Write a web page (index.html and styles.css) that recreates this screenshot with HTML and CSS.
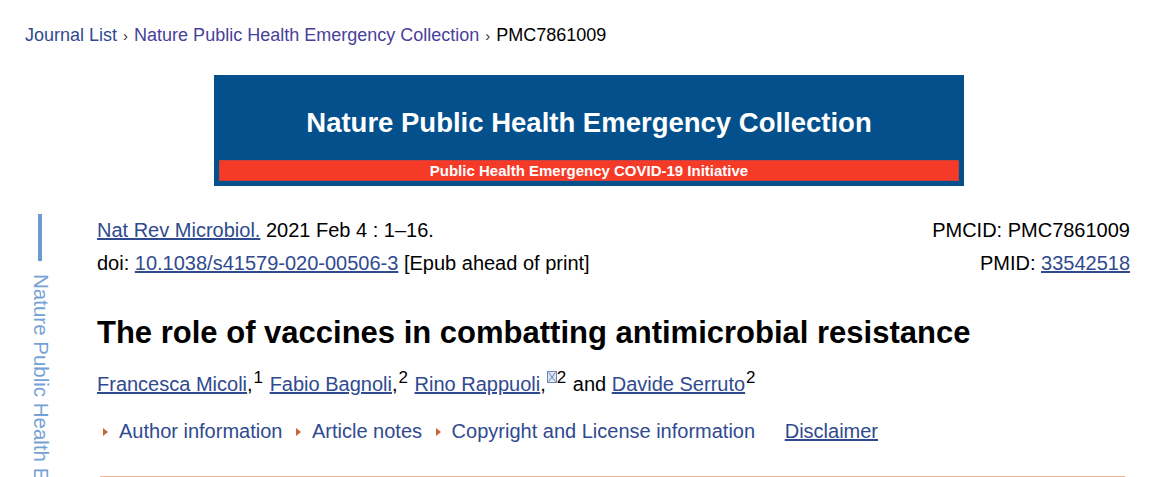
FILE: index.html
```html
<!DOCTYPE html>
<html lang="en">

<head>
  <meta charset="UTF-8">
  <meta name="viewport" content="width=device-width, initial-scale=1.0">
  <title>The role of vaccines in combatting antimicrobial resistance - PMC</title>
  <link rel="stylesheet" href="styles.css">
</head>

<body>
  <div id="page">
    <div class="crumbs">
      <a class="crumb" href="#">Journal List</a>
      <span class="sep">›</span>
      <a class="crumb visited" href="#">Nature Public Health Emergency Collection</a>
      <span class="sep">›</span>
      <span class="here">PMC7861009</span>
    </div>

    <div class="banner">
      <div class="banner-title">Nature Public Health Emergency Collection</div>
      <div class="banner-strip">Public Health Emergency COVID-19 Initiative</div>
    </div>

    <div class="main">
      <div class="side">
        <div class="side-bar"></div>
        <div class="side-text">Nature Public Health Emergency Collection</div>
      </div>

      <div class="article">
        <div class="cite">
          <div>
            <div class="line"><a href="#">Nat Rev Microbiol.</a> 2021 Feb 4 : 1–16.</div>
            <div class="line">doi: <a href="#">10.1038/s41579-020-00506-3</a> [Epub ahead of print]</div>
          </div>
          <div class="ids">
            <div class="line">PMCID: PMC7861009</div>
            <div class="line">PMID: <a href="#">33542518</a></div>
          </div>
        </div>

        <h1 class="title">The role of vaccines in combatting antimicrobial resistance</h1>

        <div class="authors">
          <a href="#">Francesca Micoli</a>,<sup>1</sup>
          <a href="#">Fabio Bagnoli</a>,<sup>2</sup>
          <a href="#">Rino Rappuoli</a>,<sup><svg class="mail" width="10" height="12" viewBox="0 0 10 12"><rect x="0.5" y="0.5" width="9" height="11" fill="#dce6f3" stroke="#6f87b3"/><path d="M1.5 1.5 L8.5 10.5 M8.5 1.5 L1.5 10.5" stroke="#6f87b3" stroke-width="1"/></svg>2</sup>
          and <a href="#">Davide Serruto</a><sup>2</sup>
        </div>

        <div class="toggles">
          <span class="tog">Author information</span>
          <span class="tog">Article notes</span>
          <span class="tog">Copyright and License information</span>
          <a class="disc" href="#">Disclaimer</a>
        </div>

        <div class="rule"></div>
      </div>
    </div>
  </div>
</body>

</html>
```

FILE: styles.css
```css
html,
body {
  margin: 0;
  padding: 0;
  background: #fff;
  overflow: hidden;
}

body {
  font-family: "Liberation Sans", Arial, sans-serif;
  color: #000;
}

a {
  color: #2f4a8f;
}

#page {
  padding: 23px 0 0 25px;
}

/* breadcrumb */
.crumbs {
  font-size: 18px;
  line-height: 24px;
}

.crumb {
  color: #2f4a8f;
  text-decoration: none;
}

.crumb.visited {
  color: #46429a;
}

.sep {
  color: #333;
  font-size: 15px;
  margin: 0 1px;
}

/* banner */
.banner {
  width: 750px;
  height: 111px;
  margin: 27px auto 0;
  background-color: #03508c;
  box-sizing: border-box;
  padding: 0 5px 5px;
  display: flex;
  flex-direction: column;
  justify-content: flex-end;
}

.banner-title {
  color: #fff;
  font-weight: bold;
  font-size: 27.5px;
  text-align: center;
  line-height: 30px;
  margin-bottom: 22px;
}

.banner-strip {
  height: 21px;
  line-height: 20px;
  background-color: #f63a28;
  border: 1px solid #c9413c;
  box-sizing: border-box;
  color: #fff;
  font-weight: bold;
  font-size: 15px;
  text-align: center;
}

/* content row */
.main {
  display: flex;
  margin-top: 28px;
}

.side {
  width: 72px;
  flex-shrink: 0;
  display: flex;
  flex-direction: column;
  align-items: flex-start;
  padding-left: 6px;
  box-sizing: border-box;
}

.side-bar {
  width: 4px;
  height: 47px;
  margin: 0 0 0 7px;
  background-color: #6a9bd1;
}

.side-text {
  writing-mode: vertical-rl;
  font-size: 20.5px;
  line-height: 20px;
  color: #74a2d6;
  margin: 13px 0 0 0;
  white-space: nowrap;
}

.article {
  flex: 1;
  padding-right: 23px;
}

.cite {
  display: flex;
  justify-content: space-between;
  font-size: 20px;
}

.line {
  line-height: 33px;
}

.ids {
  text-align: right;
}

.title {
  font-size: 31px;
  line-height: 40px;
  font-weight: bold;
  margin: 33px 0 0 0;
}

.authors {
  font-size: 20px;
  line-height: 33px;
  margin-top: 15px;
}

.authors sup {
  font-size: 17px;
  line-height: 0;
  margin: 0 1px 0 1px;
}

.mail {
  vertical-align: 0;
}

.toggles {
  font-size: 20px;
  line-height: 33px;
  margin-top: 14px;
  color: #2f4a8f;
}

.tog {
  margin-right: 2px;
}

.tog::before {
  content: "";
  display: inline-block;
  border-left: 5px solid #c8643c;
  border-top: 4px solid transparent;
  border-bottom: 4px solid transparent;
  margin: 0 11px 2px 6px;
}

.disc {
  margin-left: 22px;
}

.rule {
  height: 1px;
  background-color: #f3b594;
  margin: 28px 5px 0 3px;
}
```
